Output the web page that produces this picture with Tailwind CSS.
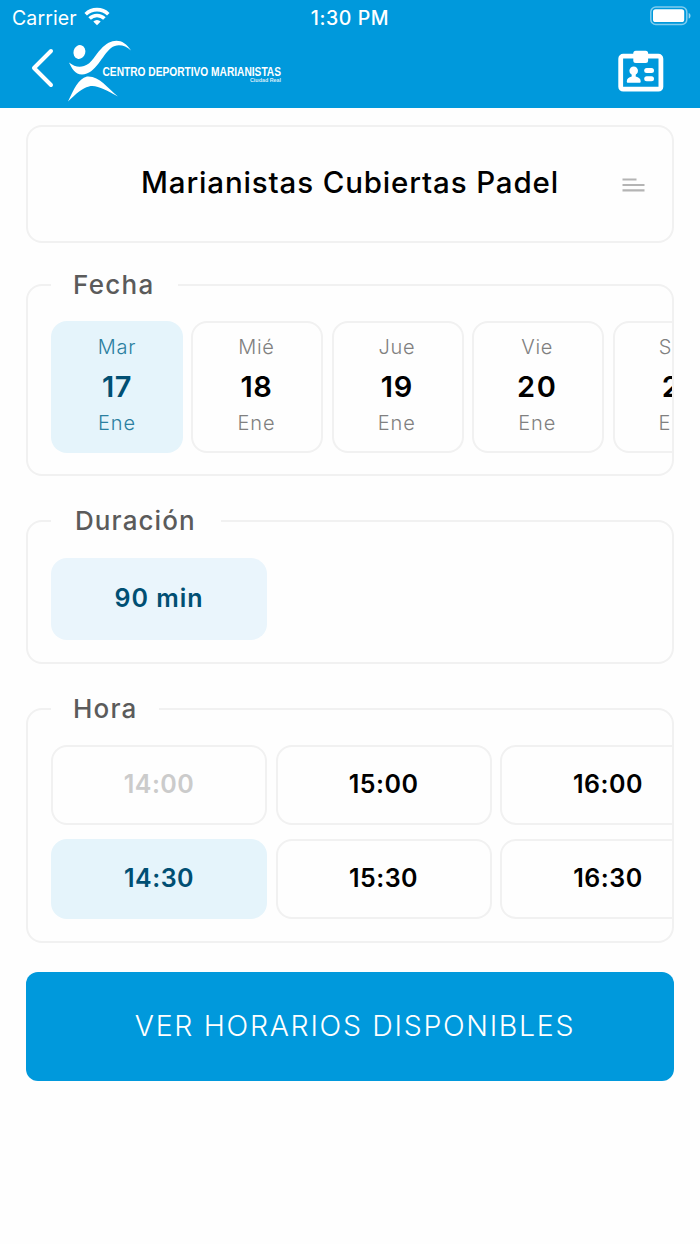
<!DOCTYPE html>
<html lang="es">
  <head>
    <meta charset="UTF-8" />
    <meta name="viewport" content="width=device-width, initial-scale=1.0" />
    <script src="https://cdn.jsdelivr.net/npm/@tailwindcss/browser@4"></script>
    <title>Reservas</title>
  </head>
  <body class="bg-[#fefefe] font-['Inter',sans-serif] text-black overflow-hidden">
    <header class="h-[108px] bg-[#0099dc] text-white">
      <!-- Status bar -->
      <div class="grid grid-cols-3 items-center h-9 pl-3 pr-2">
        <div class="flex items-center gap-[7px]">
          <span class="pt-0.5 text-[19.5px] tracking-[0.1px]">Carrier</span>
          <svg class="w-[26px] h-[19px] -mt-1" viewBox="0 0 26 19" fill="none" stroke="#fff" stroke-width="3.6">
            <path d="M1.7 7.2a16.2 16.2 0 0 1 22.6 0" />
            <path d="M5.6 11.5a10.5 10.5 0 0 1 14.8 0" />
            <path d="M13 18.2l-3.7-3.7a5.3 5.3 0 0 1 7.4 0z" fill="#fff" stroke="none" />
          </svg>
        </div>
        <div class="pt-0.5 pr-1 text-center text-[19.5px] font-medium tracking-[0.6px] whitespace-nowrap">1:30 PM</div>
        <svg class="w-[42px] h-5 -mt-1 justify-self-end" viewBox="0 0 42 20">
          <rect x="0.8" y="1" width="36" height="17.4" rx="5" fill="none" stroke="#fff" stroke-opacity=".5" stroke-width="1.5" />
          <rect x="3" y="3.2" width="31.2" height="12.8" rx="2.6" fill="#fff" />
          <path d="M38.7 7c2.4.8 2.4 4.8 0 5.6z" fill="#fff" fill-opacity=".6" />
        </svg>
      </div>

      <!-- Nav bar -->
      <div class="flex items-start h-[72px] pl-[30px] pr-9">
        <svg class="w-6 h-10 mt-3" viewBox="0 0 24 40" fill="none" stroke="#fff" stroke-width="4" stroke-linecap="round" stroke-linejoin="round">
          <path d="M21 3L4 20l17 17" />
        </svg>
        <svg class="w-[218px] h-[64px] ml-3 mt-1" viewBox="66 40 218 64" fill="#fff">
          <ellipse cx="79.4" cy="52" rx="5.9" ry="7" transform="rotate(15 79.4 52)" />
          <path d="M69 62.5c5 4 10 5 15 3.5C92 63.5 95 55 101 49c10-11 22-11.5 30 1.5-6-5.5-14-7-20-2.5C102 55 96 74 82 74.500c-7 0-10-6-13-12z" />
          <path d="M68 101.500C74 89 78 79 87 76.500c12-1 20 11 31 20-12-6-21-12-29-10C82 88 76 94 68 101.500z" />
          <text x="102.5" y="75.6" font-family="Liberation Sans" font-size="13" font-weight="700" textLength="178.5" lengthAdjust="spacingAndGlyphs">CENTRO DEPORTIVO MARIANISTAS</text>
          <text x="250" y="82.2" font-family="Liberation Sans" font-size="5.2" font-weight="700" fill-opacity=".85" textLength="31" lengthAdjust="spacingAndGlyphs">Ciudad Real</text>
        </svg>
        <svg class="w-[46px] h-[42px] mt-[14px] ml-auto" viewBox="0 0 46 42">
          <rect x="2.7" y="6.2" width="40.2" height="33" rx="2.5" fill="none" stroke="#fff" stroke-width="4.8" />
          <rect x="15.3" y="0.7" width="14.8" height="12.2" rx="2.5" fill="#fff" />
          <circle cx="15.7" cy="20.8" r="4.3" fill="#fff" />
          <path d="M13.700 23h4v3.500c3 .8 5 2 5 5 0 .9-.4 1.300-1.200 1.300H10c-.8 0-1.200-.4-1.200-1.300 0-3 2-4.200 4.900-5z" fill="#fff" />
          <rect x="26.2" y="18" width="9.8" height="5" rx="2.5" fill="#fff" />
          <rect x="26.2" y="26.3" width="9.8" height="5" rx="2.5" fill="#fff" />
        </svg>
      </div>
    </header>

    <main class="px-[26px] pt-[17px]">
      <!-- Activity -->
      <div class="grid grid-cols-[1fr_auto_1fr] items-center h-[118px] pb-[3px] border-2 border-[#f1f1f1] rounded-[16px]">
        <h1 class="col-start-2 text-[29.5px] font-[550] tracking-[0.85px] whitespace-nowrap">Marianistas Cubiertas Padel</h1>
        <svg class="w-[23px] h-[14px] mt-1 mr-[27px] justify-self-end" viewBox="0 0 23 14" fill="none" stroke="#b4b4b4" stroke-width="2.2">
          <path d="M0.500 1.500h14M0.500 7h22M0.500 12.300h22" />
        </svg>
      </div>

      <!-- Fecha -->
      <section class="mt-[41px] h-[192px] border-2 border-[#f1f1f1] rounded-[16px] pl-[23px]">
        <h2 class="w-[127px] h-9 -mt-5 pl-[22px] bg-[#fefefe] text-[26px] leading-[38px] font-[550] text-[#5b5b5b] tracking-[1.3px]">Fecha</h2>
        <div class="flex gap-[8.4px] mt-[19px] overflow-hidden text-center text-xl text-[#808080]">
          <div class="shrink-0 w-[132px] h-[132px] pt-2.5 rounded-[16px] bg-[#e5f4fb] text-[#2b7fa0]">
            <p class="h-8 leading-8 font-light tracking-[0.7px]">Mar</p>
            <p class="h-12 leading-12 text-[29px] font-semibold tracking-[0.6px] text-[#004f73]">17</p>
            <p class="h-6 leading-6 font-light tracking-[0.9px]">Ene</p>
          </div>
          <div class="shrink-0 w-[132px] h-[132px] pt-2 pr-0.5 border-2 border-[#f1f1f1] rounded-[16px]">
            <p class="h-8 leading-8 font-light tracking-[0.7px]">Mié</p>
            <p class="h-12 leading-12 text-[29px] font-semibold tracking-[0.6px] text-black">18</p>
            <p class="h-6 leading-6 font-light tracking-[0.9px]">Ene</p>
          </div>
          <div class="shrink-0 w-[132px] h-[132px] pt-2 pr-0.5 border-2 border-[#f1f1f1] rounded-[16px]">
            <p class="h-8 leading-8 font-light tracking-[0.7px]">Jue</p>
            <p class="h-12 leading-12 text-[29px] font-semibold tracking-[0.6px] text-black">19</p>
            <p class="h-6 leading-6 font-light tracking-[0.9px]">Ene</p>
          </div>
          <div class="shrink-0 w-[132px] h-[132px] pt-2 pr-0.5 border-2 border-[#f1f1f1] rounded-[16px]">
            <p class="h-8 leading-8 font-light tracking-[0.7px]">Vie</p>
            <p class="h-12 leading-12 text-[29px] font-semibold tracking-[1.5px] text-black">20</p>
            <p class="h-6 leading-6 font-light tracking-[0.9px]">Ene</p>
          </div>
          <div class="shrink-0 w-[132px] h-[132px] pt-2 pr-0.5 border-2 border-[#f1f1f1] rounded-[16px]">
            <p class="h-8 leading-8 font-light tracking-[0.7px]">Sáb</p>
            <p class="h-12 leading-12 text-[29px] font-semibold tracking-[0.6px] text-black">21</p>
            <p class="h-6 leading-6 font-light tracking-[0.9px]">Ene</p>
          </div>
        </div>
      </section>

      <!-- Duración -->
      <section class="mt-11 h-[144px] border-2 border-[#f1f1f1] rounded-[16px] pl-[23px]">
        <h2 class="w-[170px] h-9 -mt-5 pl-6 bg-[#fefefe] text-[26px] leading-[38px] font-[550] text-[#5b5b5b] tracking-[1.1px]">Duración</h2>
        <div class="flex items-center justify-center w-[216px] h-[82px] mt-5 rounded-[16px] bg-[#eaf5fc] text-[25px] font-semibold tracking-[1px] text-[#004f73]">90 min</div>
      </section>

      <!-- Hora -->
      <section class="mt-11 h-[235px] border-2 border-[#f1f1f1] rounded-[16px] pl-[23px]">
        <h2 class="w-[108px] h-9 -mt-5 pl-[22px] bg-[#fefefe] text-[26px] leading-[38px] font-[550] text-[#5b5b5b] tracking-[1.2px]">Hora</h2>
        <div class="grid grid-cols-[216px_216px_216px] gap-x-[8.5px] gap-y-3.5 mt-[19px] overflow-hidden text-center text-[25px] leading-[74px] font-semibold tracking-[0.5px]">
          <div class="h-20 border-2 border-[#f1f1f1] rounded-[16px] text-[#cbcbcb]">14:00</div>
          <div class="h-20 border-2 border-[#f1f1f1] rounded-[16px]">15:00</div>
          <div class="h-20 border-2 border-[#f1f1f1] rounded-[16px]">16:00</div>
          <div class="h-20 border-2 border-[#e5f4fb] rounded-[16px] bg-[#e5f4fb] text-[#004f73]">14:30</div>
          <div class="h-20 border-2 border-[#f1f1f1] rounded-[16px]">15:30</div>
          <div class="h-20 border-2 border-[#f1f1f1] rounded-[16px]">16:30</div>
        </div>
      </section>

      <button class="block w-full h-[109px] mt-[29px] pl-2.5 rounded-[12px] bg-[#0099dc] text-[28.5px] font-light tracking-[1.7px] text-white whitespace-nowrap">VER HORARIOS DISPONIBLES</button>
    </main>
  </body>
</html>
